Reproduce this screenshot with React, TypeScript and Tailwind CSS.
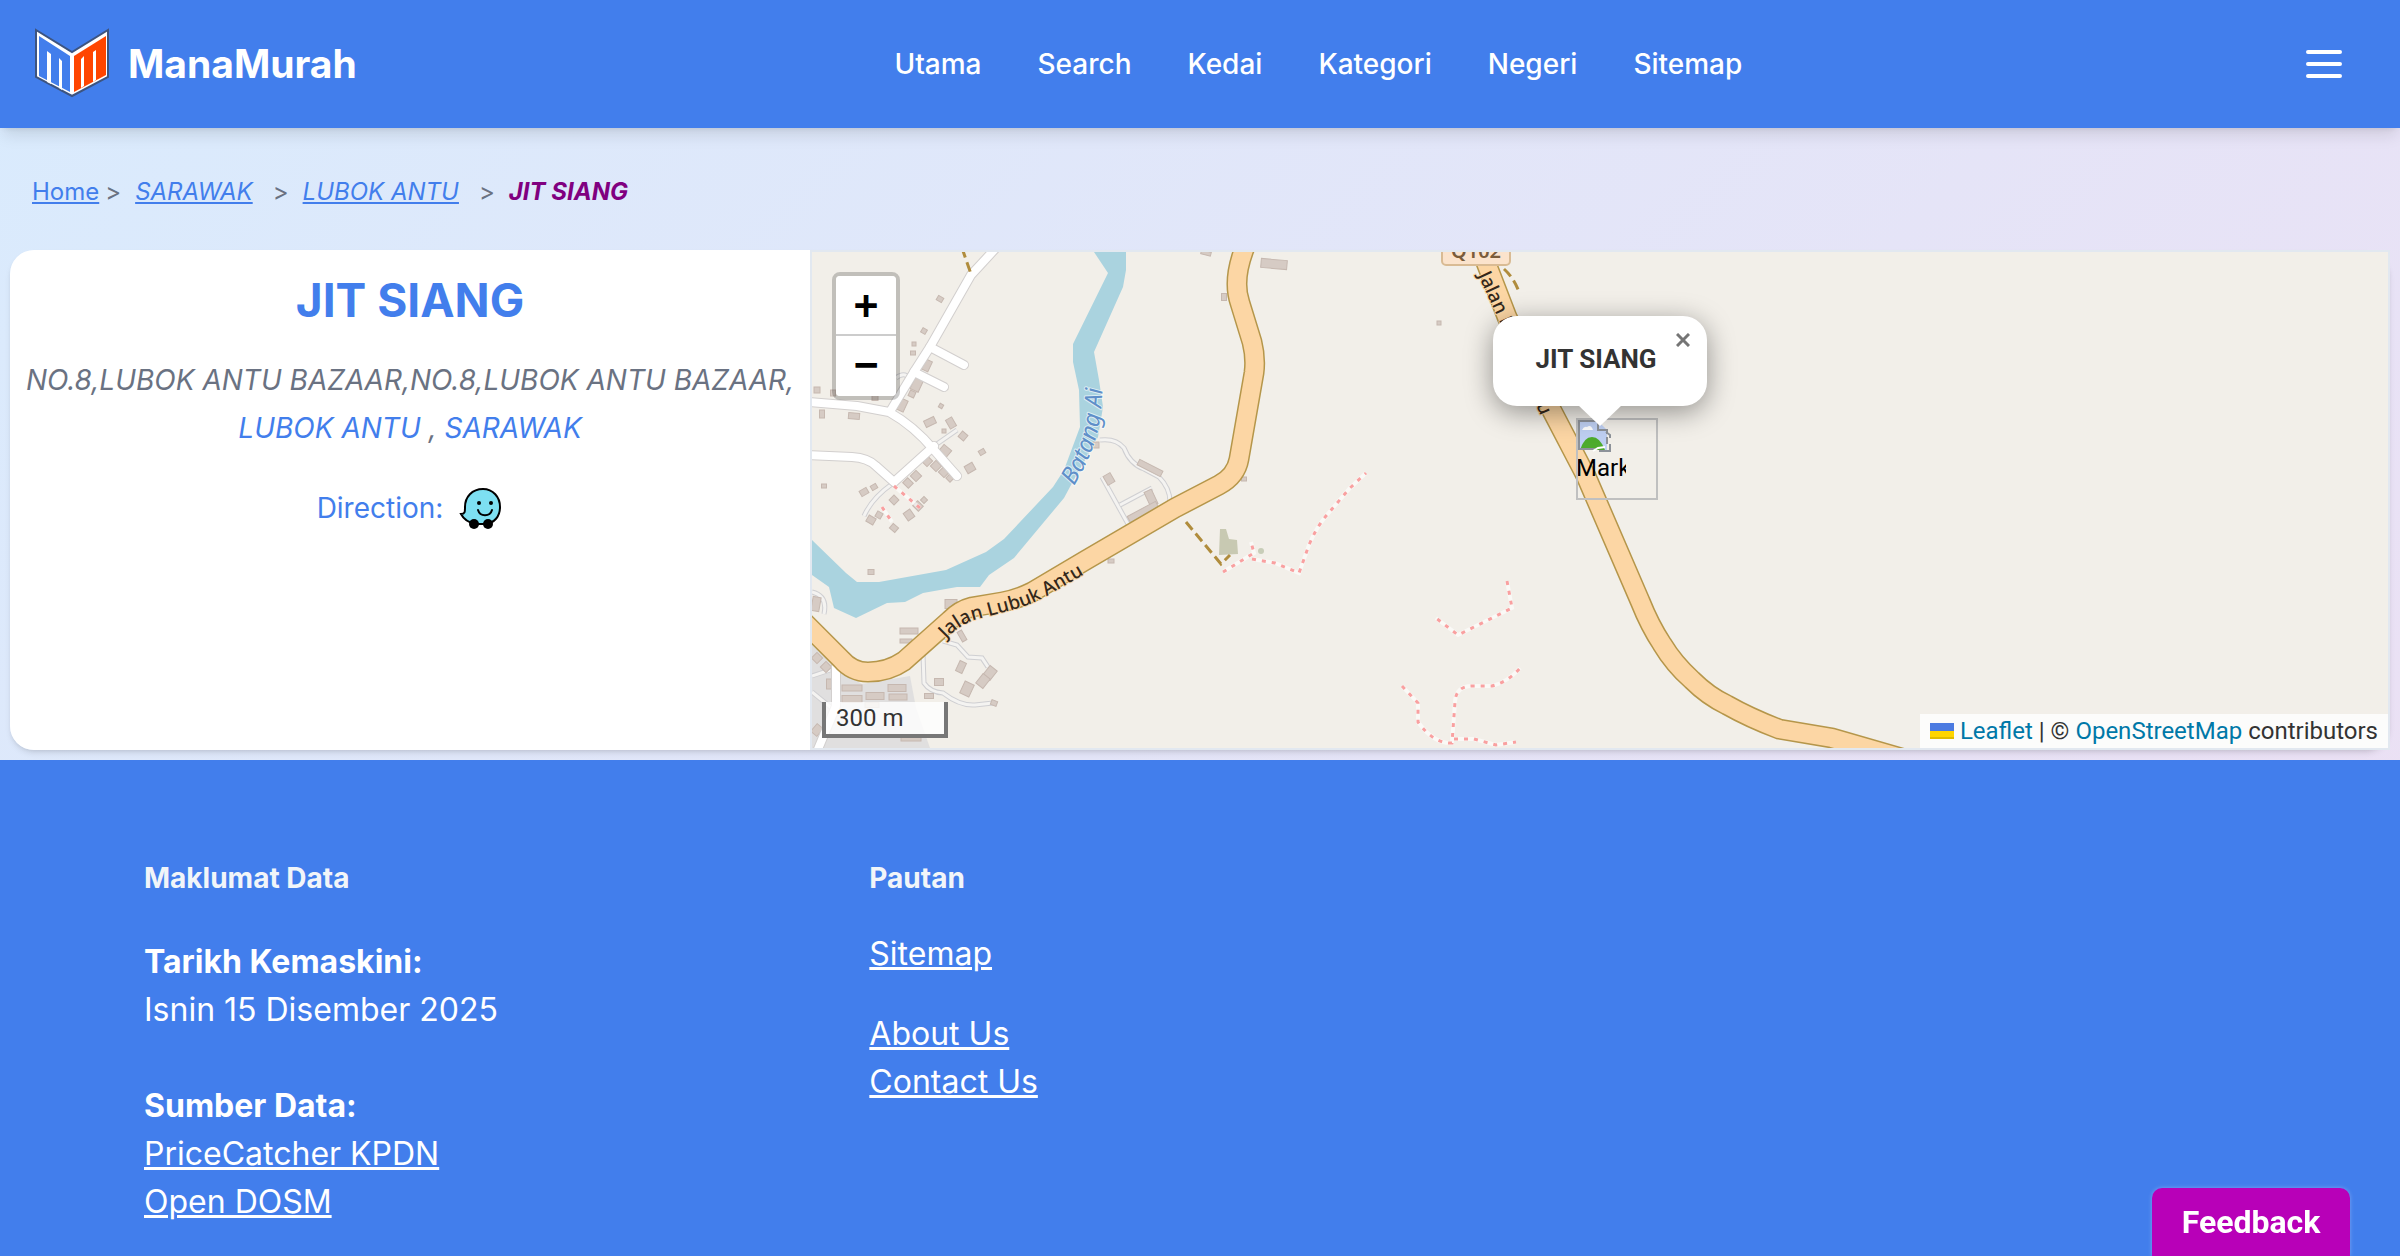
import React from "react";

interface ILink {
    path: string;
    name: string;
}

interface IBuilding {
    x: number;
    y: number;
    w: number;
    h: number;
    r: number;
}

const navLinks: ILink[] = [
    { path: '/', name: 'Utama' },
    { path: '/search', name: 'Search' },
    { path: '/kedai', name: 'Kedai' },
    { path: '/kategori', name: 'Kategori' },
    { path: '/negeri', name: 'Negeri' },
    { path: '/sitemap', name: 'Sitemap' }
];

// x, y are the centre of each building, r its rotation
const buildings: IBuilding[] = [
    { x: 128, y: 47, w: 6, h: 5, r: 30 },
    { x: 112, y: 79, w: 5, h: 5, r: 30 },
    { x: 102, y: 92, w: 4, h: 4, r: 0 },
    { x: 101, y: 101, w: 5, h: 4, r: 0 },
    { x: 114, y: 113, w: 9, h: 11, r: 25 },
    { x: 105, y: 132, w: 9, h: 14, r: 25 },
    { x: 100, y: 142, w: 6, h: 6, r: 25 },
    { x: 90, y: 153, w: 8, h: 12, r: 25 },
    { x: 5, y: 138, w: 6, h: 6, r: 0 },
    { x: 21, y: 141, w: 5, h: 6, r: 0 },
    { x: 63, y: 146, w: 6, h: 5, r: 0 },
    { x: 10, y: 162, w: 5, h: 8, r: 0 },
    { x: 42, y: 164, w: 11, h: 6, r: 5 },
    { x: 129, y: 154, w: 4, h: 4, r: 30 },
    { x: 118, y: 170, w: 11, h: 7, r: -25 },
    { x: 139, y: 171, w: 7, h: 10, r: -30 },
    { x: 132, y: 179, w: 4, h: 4, r: 0 },
    { x: 151, y: 184, w: 7, h: 7, r: 40 },
    { x: 133, y: 199, w: 10, h: 9, r: 40 },
    { x: 170, y: 200, w: 6, h: 5, r: -30 },
    { x: 158, y: 216, w: 9, h: 8, r: -30 },
    { x: 115, y: 209, w: 8, h: 8, r: 45 },
    { x: 124, y: 214, w: 8, h: 8, r: 45 },
    { x: 132, y: 220, w: 8, h: 8, r: 45 },
    { x: 138, y: 226, w: 6, h: 6, r: 45 },
    { x: 104, y: 224, w: 8, h: 8, r: 45 },
    { x: 96, y: 231, w: 8, h: 7, r: 45 },
    { x: 12, y: 234, w: 5, h: 4, r: 0 },
    { x: 52, y: 240, w: 8, h: 6, r: -30 },
    { x: 62, y: 235, w: 6, h: 5, r: -30 },
    { x: 82, y: 248, w: 7, h: 7, r: 45 },
    { x: 106, y: 254, w: 8, h: 7, r: 45 },
    { x: 112, y: 248, w: 5, h: 5, r: 45 },
    { x: 97, y: 263, w: 8, h: 9, r: -35 },
    { x: 67, y: 263, w: 6, h: 6, r: 30 },
    { x: 59, y: 268, w: 8, h: 7, r: 30 },
    { x: 82, y: 276, w: 7, h: 6, r: 40 },
    { x: 59, y: 320, w: 6, h: 5, r: 0 },
    { x: 394, y: 1, w: 10, h: 4, r: 15 },
    { x: 412, y: 45, w: 5, h: 7, r: 0 },
    { x: 462, y: 12, w: 26, h: 9, r: 5 },
    { x: 284, y: 193, w: 6, h: 6, r: 0 },
    { x: 338, y: 216, w: 26, h: 6, r: 27 },
    { x: 297, y: 227, w: 8, h: 10, r: -30 },
    { x: 339, y: 246, w: 8, h: 16, r: -25 },
    { x: 331, y: 260, w: 32, h: 7, r: -28 },
    { x: 432, y: 227, w: 5, h: 4, r: 0 },
    { x: 299, y: 309, w: 6, h: 4, r: 0 },
    { x: 139, y: 352, w: 12, h: 9, r: 0 },
    { x: 150, y: 384, w: 5, h: 11, r: -30 },
    { x: 97, y: 379, w: 18, h: 6, r: 0 },
    { x: 94, y: 389, w: 12, h: 4, r: 0 },
    { x: 4, y: 352, w: 8, h: 14, r: 10 },
    { x: 149, y: 415, w: 7, h: 11, r: 25 },
    { x: 178, y: 421, w: 9, h: 12, r: 38 },
    { x: 171, y: 429, w: 9, h: 12, r: 38 },
    { x: 155, y: 437, w: 10, h: 13, r: 25 },
    { x: 127, y: 430, w: 9, h: 7, r: 0 },
    { x: 117, y: 444, w: 9, h: 5, r: 0 },
    { x: 182, y: 451, w: 6, h: 5, r: 20 },
    { x: 40, y: 436, w: 20, h: 6, r: 0 },
    { x: 40, y: 447, w: 20, h: 7, r: 0 },
    { x: 63, y: 444, w: 18, h: 7, r: 0 },
    { x: 85, y: 436, w: 18, h: 7, r: 0 },
    { x: 86, y: 445, w: 18, h: 6, r: 0 },
    { x: 60, y: 453, w: 14, h: 5, r: 0 },
    { x: 5, y: 406, w: 8, h: 8, r: 45 },
    { x: 14, y: 415, w: 8, h: 8, r: 45 },
    { x: 18, y: 432, w: 7, h: 10, r: 0 },
    { x: 5, y: 478, w: 8, h: 10, r: 40 },
    { x: 99, y: 487, w: 20, h: 4, r: 0 },
    { x: 627, y: 71, w: 4, h: 4, r: 0 }
];

const whiteRoads = [
    'M183 -3L159 23L118 95L102 120L79 158',
    'M118 95L152 113',
    'M102 120L132 135',
    'M-4 150L45 154L77 160Q102 174 122 198L145 224',
    'M-4 203L40 205Q56 206 64 214L82 230L122 194',
    'M24 414V454L4 502'
];

const serviceRoads = [
    'M122 194L145 178',
    'M80 232Q60 246 52 264',
    'M288 188Q304 186 312 196Q318 212 332 217L347 225Q358 236 358 250',
    'M290 225L316 272',
    'M308 253L340 236',
    'M111 402L112 431Q118 440 131 441Q148 454 163 453L181 451',
    'M131 389L145 393L156 405L170 406L176 415',
    'M84 126Q94 118 100 130',
    'M0 340Q16 344 12 362',
    'M0 440L22 458M0 424L18 418'
];

const mainRoads = [
    'M-8 370L29 407Q40 420 56 420Q76 420 92 409L138 368Q148 358 160 355L190 350Q206 347 220 340L274 308L363 256L407 233Q424 224 427 207L442 121Q444 106 440 90L428 51Q420 28 433 -5',
    'M668 -5L695 65L738 155L774 224L828 349Q838 374 850 392Q862 412 880 428Q896 444 915 453Q938 466 967 477L1020 486L1110 512'
];

const footPaths = [
    'M411 320L442 301L439 290',
    'M440 307L463 311L487 321L497 293Q504 276 514 264L538 236L554 221',
    'M695 329L700 356L646 383L624 366',
    'M590 434L606 451V470Q622 492 640 491L643 450Q644 434 660 434H680Q696 430 708 416',
    'M642 487L662 487L684 493L704 490',
    'M82 234L108 256',
    'M70 255L80 270'
];

const Logo = () => (
    <svg viewBox="0 0 80 72" className="h-[72px] w-20" aria-hidden="true">
        <path d="M4 2L40 24L76 2V49L40 68L4 49Z" fill="#fff" stroke="#3d5480" strokeWidth="2" />
        <path d="M7 8L38 28V64L7 48Z" fill="#427eec" />
        <path d="M74 8L42 28V64L74 47Z" fill="#ff4500" />
        <path d="M15 23L19 26V56L15 54ZM27 30L30 33V62L27 60ZM49 31L52 28V58L49 60ZM61 24L64 22V52L61 54Z" fill="#fff" />
    </svg>
);

const WazeIcon = () => (
    <svg viewBox="0 0 44 44" className="h-11 w-11" aria-hidden="true">
        <path d="M24 3C13 3 6 11 6 21C6 26 6 28 2 28C5 34 11 37 17 38H26C36 37 41 30 41 21C41 11 34 3 24 3Z" fill="#7de0f2" stroke="#000" strokeWidth="2" />
        <circle cx="20" cy="17" r="2" />
        <circle cx="32" cy="17" r="2" />
        <path d="M19 24C21 31 31 31 33 24" fill="none" stroke="#000" strokeWidth="2" strokeLinecap="round" />
        <circle cx="15" cy="38" r="5" />
        <circle cx="29" cy="38" r="5" />
    </svg>
);

const Navbar = () => (
    <header className="relative z-10 flex h-32 items-center justify-between bg-[#427eec] px-8 text-white shadow-lg">
        <a href="/" className="flex items-center gap-4">
            <Logo />
            <span className="text-[39px] font-bold">ManaMurah</span>
        </a>

        <nav className="flex items-center gap-14 text-[28px] font-medium">
            {navLinks.map((link) => (
                <a key={link.path} href={link.path}>{link.name}</a>
            ))}
        </nav>

        <button type="button" aria-label="Menu" className="flex h-12 w-[88px] items-center justify-center">
            <svg viewBox="0 0 36 28" className="h-7 w-9" fill="none" stroke="currentColor" strokeWidth="4" strokeLinecap="round">
                <path d="M2 2H34M2 14H34M2 26H34" />
            </svg>
        </button>
    </header>
);

const Breadcrumb = () => (
    <nav aria-label="Breadcrumb" className="flex h-[122px] items-center px-8 pt-[6px] text-2xl text-[#427eec]">
        <a href="/" className="underline">Home</a>
        <span className="mr-[14px] ml-[6px] text-gray-500">&gt;</span>
        <a href="/negeri/sarawak" className="italic underline">SARAWAK</a>
        <span className="mr-[14px] ml-5 text-gray-500">&gt;</span>
        <a href="/negeri/sarawak/lubok-antu" className="italic underline">LUBOK ANTU</a>
        <span className="mr-[14px] ml-5 text-gray-500">&gt;</span>
        <span className="font-bold text-[#800080] italic">JIT SIANG</span>
    </nav>
);

const StoreInfo = () => (
    <section className="flex w-[calc(100vw/3)] shrink-0 flex-col items-center rounded-l-3xl bg-white px-4 pt-[22px] text-[28px] leading-[48px]">
        <h1 className="text-[46px] leading-[56px] font-bold text-[#427eec]">JIT SIANG</h1>
        <address className="mt-7 text-center text-gray-500">
            <span className="block whitespace-nowrap">NO.8,LUBOK ANTU BAZAAR,NO.8,LUBOK ANTU BAZAAR,</span>
            <a href="/negeri/sarawak/lubok-antu" className="text-[#427eec]">LUBOK ANTU</a> , <a href="/negeri/sarawak" className="text-[#427eec]">SARAWAK</a>
        </address>
        <div className="mt-8 flex items-center gap-4 text-[#427eec]">
            <span>Direction:</span>
            <a href="/waze" aria-label="Waze"><WazeIcon /></a>
        </div>
    </section>
);

const MapTiles = () => (
    <svg viewBox="0 0 1576 496" className="absolute top-0 left-1/2 h-[496px] w-[1576px] -translate-x-1/2" fill="none" aria-hidden="true">
        <path d="M0 390L24 418L50 432L98 424L104 456L118 496H0Z" fill="#e0dfdf" />
        <path d="M282 0L296 21L261 92V110L267 138L268 175L252 218L241 235L192 287L174 300L134 318L67 330H45L34 321L0 288V323L17 335L22 356L44 366L75 351L93 350L111 341L145 335H168L177 323L202 306L252 246L259 233L286 185L291 155L287 128L282 100L311 35L314 18V0Z" fill="#aad3df" />

        {serviceRoads.map((d) => <path key={d} d={d} stroke="#cfcfd2" strokeWidth="5" />)}
        {serviceRoads.map((d) => <path key={d} d={d} stroke="#f4f3f1" strokeWidth="3" />)}

        {buildings.map((b) => (
            <rect
                key={`${b.x}-${b.y}`}
                x={b.x - b.w / 2}
                y={b.y - b.h / 2}
                width={b.w}
                height={b.h}
                transform={`rotate(${b.r} ${b.x} ${b.y})`}
                fill="#d6cbc4"
                stroke="#c6b8b0"
            />
        ))}
        <path d="M408 277L407 303L426 302L425 288L417 287L414 277Z" fill="#c8c9b2" />
        <circle cx="449" cy="299" r="3" fill="#c8cdb8" />

        <g strokeLinecap="round" strokeLinejoin="round">
            {whiteRoads.map((d) => <path key={d} d={d} stroke="#d2cfce" strokeWidth="10" />)}
            {whiteRoads.map((d) => <path key={d} d={d} stroke="#fff" strokeWidth="8" />)}
        </g>

        <g stroke="#fff" strokeOpacity="0.6" strokeWidth="4">
            {footPaths.map((d) => <path key={d} d={d} />)}
        </g>
        <g stroke="#f9a0a0" strokeWidth="3" strokeDasharray="4 6">
            {footPaths.map((d) => <path key={d} d={d} />)}
        </g>
        <g stroke="#b08c3c" strokeWidth="3" strokeDasharray="10 5">
            <path d="M374 270L409 312L418 303" />
            <path d="M150 -4L159 22" />
            <path d="M692 17Q702 26 707 40" />
        </g>

        {mainRoads.map((d) => <path key={d} d={d} stroke="#b5964a" strokeWidth="21" />)}
        {mainRoads.map((d) => <path key={d} d={d} stroke="#fcd6a4" strokeWidth="18" />)}

        <rect x="630" y="-20" width="68" height="33" rx="4" fill="#fbe3cc" stroke="#d9bb94" strokeWidth="2" />
        <text x="664" y="6" textAnchor="middle" fontSize="20" fill="#7a5c3a" className="font-['Noto_Sans'] font-semibold">Q102</text>

        <path id="label-river" d="M262 234Q278 208 285 182Q291 158 291 110" />
        <path id="label-road" d="M134 387Q150 370 170 366L200 358Q222 352 240 341L290 312" />
        <path id="label-road-east" d="M666 23L692 79L746 204" />
        <g className="font-['Noto_Sans']" strokeLinejoin="round" paintOrder="stroke">
            <text fontSize="24" fontStyle="italic" fill="#5f8fc9" stroke="#fff" strokeOpacity="0.6" strokeWidth="2">
                <textPath href="#label-river">Batang Ai</textPath>
            </text>
            <text fontSize="19" fill="#33271a" stroke="#fcd6a4" strokeWidth="2" className="font-medium">
                <textPath href="#label-road">Jalan Lubuk Antu</textPath>
            </text>
            <text fontSize="19" fill="#33271a" stroke="#fcd6a4" strokeWidth="2" className="font-medium">
                <textPath href="#label-road-east">Jalan Lubuk Antu</textPath>
            </text>
        </g>
    </svg>
);

const MapMarker = () => (
    <div className="absolute bottom-1/2 left-1/2 -ml-6 h-[82px] w-[82px] outline-2 -outline-offset-2 outline-[#c0c0c0]">
        <div className="w-[50px] overflow-hidden text-2xl leading-8 text-black">
            <svg viewBox="0 0 32 32" className="mt-[2px] h-8 w-9" aria-hidden="true">
                <path d="M1 1H20L29 10V30H1Z" fill="#bfd0f3" />
                <path d="M4 10Q6 6 9 7Q13 4 15 10Z" fill="#fff" />
                <path d="M2 30Q6 17 14 17Q22 17 27 30Z" fill="#4dab2c" />
                <path d="M1 30V1H20V10H29V14M28 12L32 15V18M29 17V24M32 24V31H21M1 29H17" fill="none" stroke="#8d9299" strokeWidth="2" />
                <path d="M15 31L20 28L27 27" fill="none" stroke="#fff" strokeWidth="2" />
            </svg>
            <span className="block">Marker</span>
        </div>
    </div>
);

const MapPopup = () => (
    <div className="absolute bottom-1/2 left-1/2 mb-[94px] -translate-x-1/2">
        <div className="flex h-[90px] w-[214px] items-center justify-center rounded-3xl bg-white pb-1 shadow-[0_6px_28px_rgba(0,0,0,0.4)]">
            <span className="pr-2 text-[26px] font-bold text-[#333]">JIT SIANG</span>
        </div>
        <button type="button" aria-label="Close popup" className="absolute top-0 right-0 flex h-12 w-12 items-center justify-center text-[#757575]">
            <svg viewBox="0 0 14 14" className="h-[14px] w-[14px]" fill="none" stroke="currentColor" strokeWidth="3">
                <path d="M1 1L13 13M13 1L1 13" />
            </svg>
        </button>
        <svg viewBox="0 0 44 22" className="absolute top-full left-1/2 -mt-px h-[22px] w-11 -translate-x-1/2" aria-hidden="true">
            <path d="M0 0H44L22 21Z" fill="#fff" />
        </svg>
    </div>
);

const StoreMap = () => (
    <section aria-label="Map" className="relative flex-1 overflow-hidden border-2 border-slate-200 bg-[#f2efe9] font-['Roboto',sans-serif]">
        <MapTiles />
        <MapMarker />
        <MapPopup />

        <div className="absolute top-5 left-5 flex flex-col overflow-hidden rounded-lg border-4 border-black/20 bg-clip-padding font-['DejaVu_Sans_Mono',monospace] text-[40px] font-bold text-black">
            <button type="button" aria-label="Zoom in" className="flex h-[60px] w-[60px] items-center justify-center border-b-2 border-[#ccc] bg-white">+</button>
            <button type="button" aria-label="Zoom out" className="flex h-[60px] w-[60px] items-center justify-center bg-white pb-1">−</button>
        </div>

        <div className="absolute bottom-[10px] left-[10px] h-9 w-[126px] border-4 border-t-0 border-[#777] bg-white/80 px-[10px] text-2xl leading-8 text-[#333]">300 m</div>

        <div className="absolute right-0 bottom-0 flex h-[34px] items-center bg-white/80 px-[10px] text-2xl leading-[34px] text-[#333]">
            <svg viewBox="0 0 24 16" className="mr-[6px] h-4 w-6" aria-hidden="true">
                <path d="M0 0H24V8H0Z" fill="#4c7be1" />
                <path d="M0 8H24V14H0Z" fill="#ffd500" />
                <path d="M0 14H24V16H0Z" fill="#e0bc00" />
            </svg>
            <p>
                <a href="/leaflet" className="text-[#0078a8]">Leaflet</a> | © <a href="/copyright" className="text-[#0078a8]">OpenStreetMap</a> contributors
            </p>
        </div>
    </section>
);

const Footer = () => (
    <footer className="grid flex-1 grid-cols-3 gap-16 bg-[#427eec] px-36 pt-[94px] pb-5 text-[32px] leading-[48px] text-white">
        <section>
            <h2 className="text-[28px] leading-[48px] font-bold text-slate-100">Maklumat Data</h2>
            <p className="mt-9 font-bold">Tarikh Kemaskini:</p>
            <p>Isnin 15 Disember 2025</p>
            <p className="mt-12 font-bold">Sumber Data:</p>
            <ul>
                <li><a href="/pricecatcher" className="underline">PriceCatcher KPDN</a></li>
                <li><a href="/opendosm" className="underline">Open DOSM</a></li>
            </ul>
        </section>
        <section>
            <h2 className="text-[28px] leading-[48px] font-bold text-slate-100">Pautan</h2>
            <ul className="mt-7">
                <li className="mb-8"><a href="/sitemap" className="underline">Sitemap</a></li>
                <li><a href="/about" className="underline">About Us</a></li>
                <li><a href="/contact" className="underline">Contact Us</a></li>
            </ul>
        </section>
    </footer>
);

const App = () => {
  return (
    <div className="flex min-h-screen flex-col bg-linear-135 from-[#d9ebfd] to-[#eddff3] font-['Inter',sans-serif]">
        <Navbar />
        <main>
            <Breadcrumb />
            <div className="mx-[10px] mb-[10px] flex h-[500px] rounded-3xl shadow-md">
                <StoreInfo />
                <StoreMap />
            </div>
        </main>
        <Footer />
        <button type="button" className="fixed right-[50px] bottom-0 h-[68px] w-[198px] rounded-t-[10px] bg-[#b800b8] font-['Roboto',sans-serif] text-[32px] font-bold text-white shadow-[0_0_4px_rgba(255,255,255,0.3)]">Feedback</button>
    </div>
  )
};

export default App;
